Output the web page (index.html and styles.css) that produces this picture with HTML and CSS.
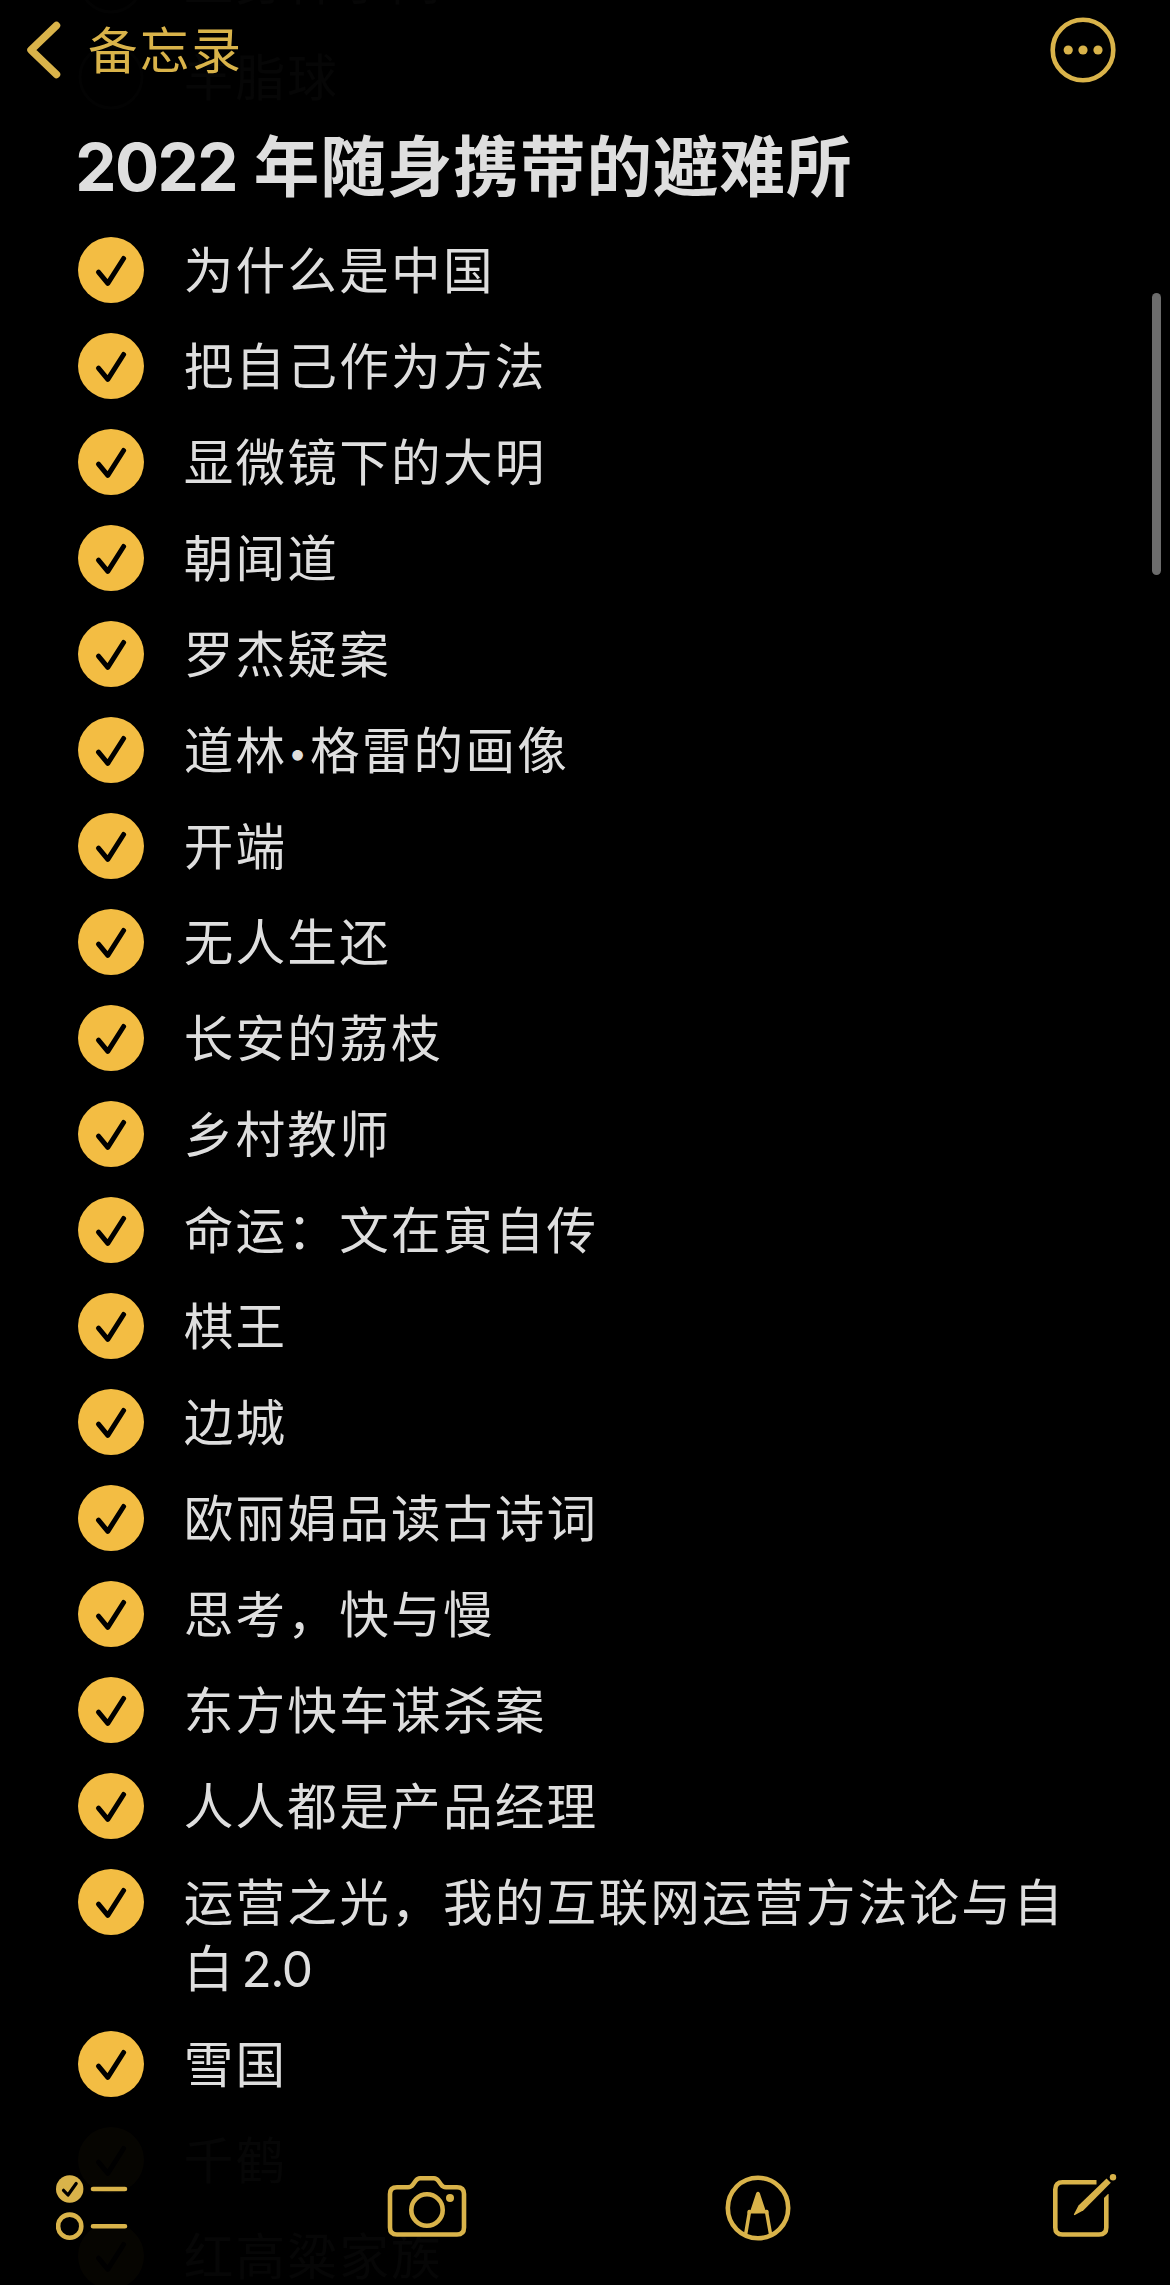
FILE: index.html
```
<!DOCTYPE html>
<html lang="zh-CN">
<head>
<meta charset="utf-8">
<title>备忘录</title>
<link rel="stylesheet" href="styles.css">
</head>
<body>
<svg class="defs" aria-hidden="true">
  <symbol id="done" viewBox="0 0 66 66"><circle cx="33" cy="33" r="33"/><path class="tick" d="M20.500 35.200L29.800 46.300L45.600 21.500"/></symbol>
  <symbol id="todo" viewBox="0 0 66 66"><circle class="ring" cx="33" cy="33" r="31"/></symbol>
</svg>
<div class="screen">
  <header class="topbar">
    <a class="back">
      <svg class="chevron" viewBox="0 0 34 60"><path d="M29.500 5.500L4 30L29.500 54.500"/></svg>
      <span>备忘录</span>
    </a>
    <svg class="more" viewBox="0 0 66 66"><circle class="line" cx="33" cy="33" r="30.300"/><circle cx="18.200" cy="33" r="4.600"/><circle cx="33" cy="33" r="4.600"/><circle cx="48" cy="33" r="4.600"/></svg>
  </header>
  <main class="note">
    <ul class="list behind above">
      <li><svg><use href="#todo"/></svg><span>正身祥子问</span></li>
      <li><svg><use href="#todo"/></svg><span>羊脂球</span></li>
    </ul>
    <h1><span class="year">2022</span> 年随身携带的避难所</h1>
    <ul class="list">
      <li><svg><use href="#done"/></svg><span>为什么是中国</span></li>
      <li><svg><use href="#done"/></svg><span>把自己作为方法</span></li>
      <li><svg><use href="#done"/></svg><span>显微镜下的大明</span></li>
      <li><svg><use href="#done"/></svg><span>朝闻道</span></li>
      <li><svg><use href="#done"/></svg><span>罗杰疑案</span></li>
      <li><svg><use href="#done"/></svg><span>道林<i class="dot">•</i>格雷的画像</span></li>
      <li><svg><use href="#done"/></svg><span>开端</span></li>
      <li><svg><use href="#done"/></svg><span>无人生还</span></li>
      <li><svg><use href="#done"/></svg><span>长安的荔枝</span></li>
      <li><svg><use href="#done"/></svg><span>乡村教师</span></li>
      <li><svg><use href="#done"/></svg><span>命运：文在寅自传</span></li>
      <li><svg><use href="#done"/></svg><span>棋王</span></li>
      <li><svg><use href="#done"/></svg><span>边城</span></li>
      <li><svg><use href="#done"/></svg><span>欧丽娟品读古诗词</span></li>
      <li><svg><use href="#done"/></svg><span>思考，快与慢</span></li>
      <li><svg><use href="#done"/></svg><span>东方快车谋杀案</span></li>
      <li><svg><use href="#done"/></svg><span>人人都是产品经理</span></li>
      <li><svg><use href="#done"/></svg><span>运营之光，我的互联网运营方法论与自白<em>2.0</em></span></li>
      <li><svg><use href="#done"/></svg><span>雪国</span></li>
    </ul>
    <ul class="list behind">
      <li><svg><use href="#done"/></svg><span>千鹤</span></li>
      <li><svg><use href="#done"/></svg><span>红高粱家族</span></li>
    </ul>
  </main>
  <div class="scrollbar"></div>
  <footer class="toolbar">
    <svg width="72" height="66" viewBox="0 0 72 66"><circle cx="13.700" cy="14" r="13.700"/><path class="tick thin" d="M7.500 15.300L12 20L20.200 8.500"/><circle class="line" cx="13.700" cy="51.200" r="11.600"/><path class="line" d="M37 14H69M37 51.200H69"/></svg>
    <svg class="camera" width="78" height="62" viewBox="0 0 78 62"><path class="line" d="M9 11.300H20Q23 11.300 25 8.500L27.500 5Q29.500 2.300 32 2.300H46Q48.500 2.300 50.500 5L53 8.500Q55 11.300 58 11.300H69Q76 11.300 76 18V51.500Q76 58.500 69 58.500H9Q2 58.500 2 51.500V18Q2 11.300 9 11.300Z"/><circle class="line" cx="39" cy="34" r="15.700"/><circle cx="62" cy="22" r="4"/></svg>
    <svg class="marker" width="66" height="66" viewBox="0 0 66 66"><circle class="line" cx="33" cy="33" r="30.200"/><path d="M31.200 18Q33 15.500 34.800 18L40.500 35.200H42.500Q43.500 35.200 43.500 36.500V38.500H22.500V36.500Q22.500 35.200 23.500 35.200H25.500Z"/><path class="line side" d="M24.500 36.500L20.500 60M41.500 36.500L45.700 60"/></svg>
    <svg class="compose" width="64" height="64" viewBox="0 0 64 64"><path class="line butt" d="M43.500 8.300H9.500Q2.300 8.300 2.300 15.500V53.500Q2.300 60.500 9.500 60.500H46Q53.300 60.500 53.300 53.500V20"/><path class="pencil-gap" d="M36 29L60 5"/><path d="M53.500 4.500L57.800 8.800L30.500 36.200L21.500 41.200L20.800 40.500L25.500 31.500Z"/><circle cx="60" cy="3.200" r="3.200"/></svg>
  </footer>
</div>
</body>
</html>
```
FILE: styles.css
```
:root {
  --gold: #f3bd43;
  --bar-gold: #d9b34a;
  --ink: #dedede;
}

body {
  margin: 0;
  background: #000;
  color: var(--ink);
  font-family: Inter, "Noto Sans CJK SC", sans-serif;
}

.defs {
  display: none;
}

.screen {
  position: relative;
  width: 1170px;
  height: 2285px;
  overflow: hidden;
}

/* bars float over the scrolling note */
.topbar,
.toolbar {
  position: absolute;
  left: 0;
  right: 0;
  z-index: 1;
  display: flex;
  justify-content: space-between;
  align-items: center;
  box-sizing: border-box;
  fill: var(--bar-gold);
  color: var(--bar-gold);
}

.topbar {
  top: 0;
  height: 100px;
  padding: 0 54px 0 27px;
}

.toolbar {
  bottom: 0;
  height: 154px;
  padding: 0 53px 0 56px;
}

.back {
  display: flex;
  align-items: center;
  gap: 27px;
  font-size: 49.500px;
  letter-spacing: 2.300px;
}

.back span {
  margin-bottom: 6px;
}

.chevron {
  width: 34px;
  height: 60px;
  fill: none;
  stroke: var(--bar-gold);
  stroke-width: 7.500;
  stroke-linecap: round;
  stroke-linejoin: round;
}

.more {
  width: 66px;
  height: 66px;
}

.line {
  fill: none;
  stroke: var(--bar-gold);
  stroke-width: 4.600;
  stroke-linecap: round;
  stroke-linejoin: round;
}

.side {
  stroke-width: 3.500;
}

.butt {
  stroke-linecap: butt;
}

.camera {
  margin-bottom: 2px;
  overflow: visible;
}

.marker {
  margin: 0 2px 0 -2px;
}

.compose {
  margin-bottom: 5px;
  overflow: visible;
}

.tick {
  fill: none;
  stroke: #000;
  stroke-width: 5;
  stroke-linecap: round;
  stroke-linejoin: round;
}

.thin {
  stroke-width: 3.200;
}

.ring {
  fill: none;
  stroke: #777;
  stroke-width: 3;
}

.pencil-gap {
  stroke: #000;
  stroke-width: 14;
}

.note {
  margin-top: -67px;
  padding: 0 90px 0 77.700px;
}

h1 {
  margin: 0 0 0 -2.500px;
  height: 97px;
  font-size: 65.500px;
  line-height: 86px;
  font-weight: 700;
  letter-spacing: 1.050px;
  white-space: nowrap;
}

.year {
  letter-spacing: -1.500px;
}

.list {
  margin: 0;
  padding: 0;
  list-style: none;
  font-size: 49.600px;
  line-height: 66px;
  letter-spacing: 2.250px;
  fill: var(--gold);
}

.list li {
  display: flex;
  gap: 40px;
  padding: 15px 0;
}

.list span {
  margin: 1px 0 -1px;
}

.list svg {
  flex: none;
  width: 66px;
  height: 66px;
}

.list em {
  margin-left: 6px;
  font-style: normal;
  letter-spacing: -1.500px;
}

.dot {
  display: inline-block;
  width: 22.500px;
  font-size: 34px;
  font-style: normal;
  line-height: 1;
  letter-spacing: 0;
  text-align: center;
  text-indent: -2px;
  vertical-align: 4px;
}

.behind {
  opacity: 0.025;
}

.scrollbar {
  position: absolute;
  top: 293px;
  right: 9px;
  width: 9px;
  height: 282px;
  border-radius: 5px;
  background: #6c6c6c;
}
```
